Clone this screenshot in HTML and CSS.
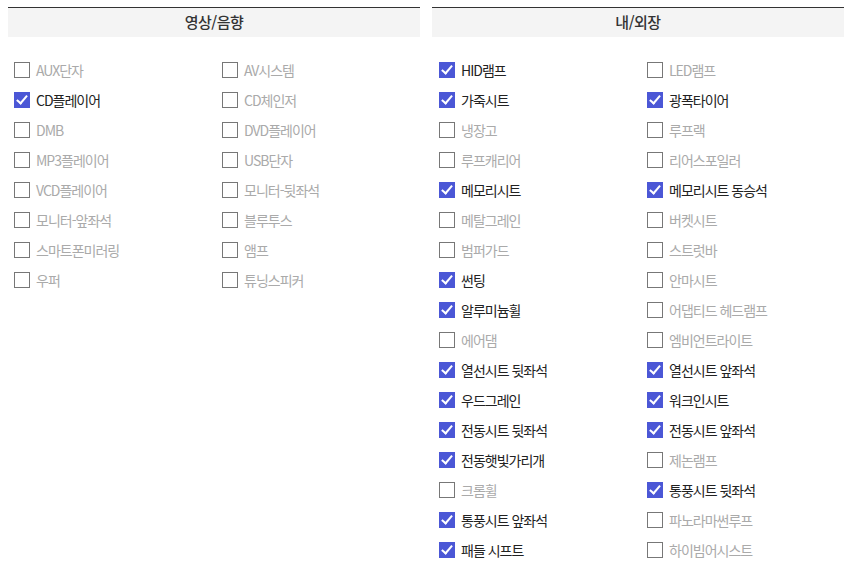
FILE: index.html
```html
<!DOCTYPE html>
<html lang="ko">
<head>
<meta charset="UTF-8">
<meta name="viewport" content="width=device-width, initial-scale=1.0">
<title>옵션</title>
<link rel="stylesheet" href="styles.css">
</head>
<body>

<div class="options">
  <div class="panel">
    <div class="panel-title">영상/음향</div>
    <ul class="opt-list">
      <li class="opt"><span class="box"></span>AUX단자</li>
      <li class="opt"><span class="box"></span>AV시스템</li>
      <li class="opt on"><span class="box"></span>CD플레이어</li>
      <li class="opt"><span class="box"></span>CD체인저</li>
      <li class="opt"><span class="box"></span>DMB</li>
      <li class="opt"><span class="box"></span>DVD플레이어</li>
      <li class="opt"><span class="box"></span>MP3플레이어</li>
      <li class="opt"><span class="box"></span>USB단자</li>
      <li class="opt"><span class="box"></span>VCD플레이어</li>
      <li class="opt"><span class="box"></span>모니터-뒷좌석</li>
      <li class="opt"><span class="box"></span>모니터-앞좌석</li>
      <li class="opt"><span class="box"></span>블루투스</li>
      <li class="opt"><span class="box"></span>스마트폰미러링</li>
      <li class="opt"><span class="box"></span>앰프</li>
      <li class="opt"><span class="box"></span>우퍼</li>
      <li class="opt"><span class="box"></span>튜닝스피커</li>
    </ul>
  </div>

  <div class="panel">
    <div class="panel-title">내/외장</div>
    <ul class="opt-list">
      <li class="opt on"><span class="box"></span>HID램프</li>
      <li class="opt"><span class="box"></span>LED램프</li>
      <li class="opt on"><span class="box"></span>가죽시트</li>
      <li class="opt on"><span class="box"></span>광폭타이어</li>
      <li class="opt"><span class="box"></span>냉장고</li>
      <li class="opt"><span class="box"></span>루프랙</li>
      <li class="opt"><span class="box"></span>루프캐리어</li>
      <li class="opt"><span class="box"></span>리어스포일러</li>
      <li class="opt on"><span class="box"></span>메모리시트</li>
      <li class="opt on"><span class="box"></span>메모리시트 동승석</li>
      <li class="opt"><span class="box"></span>메탈그레인</li>
      <li class="opt"><span class="box"></span>버켓시트</li>
      <li class="opt"><span class="box"></span>범퍼가드</li>
      <li class="opt"><span class="box"></span>스트럿바</li>
      <li class="opt on"><span class="box"></span>썬팅</li>
      <li class="opt"><span class="box"></span>안마시트</li>
      <li class="opt on"><span class="box"></span>알루미늄휠</li>
      <li class="opt"><span class="box"></span>어댑티드 헤드램프</li>
      <li class="opt"><span class="box"></span>에어댐</li>
      <li class="opt"><span class="box"></span>엠비언트라이트</li>
      <li class="opt on"><span class="box"></span>열선시트 뒷좌석</li>
      <li class="opt on"><span class="box"></span>열선시트 앞좌석</li>
      <li class="opt on"><span class="box"></span>우드그레인</li>
      <li class="opt on"><span class="box"></span>워크인시트</li>
      <li class="opt on"><span class="box"></span>전동시트 뒷좌석</li>
      <li class="opt on"><span class="box"></span>전동시트 앞좌석</li>
      <li class="opt on"><span class="box"></span>전동햇빛가리개</li>
      <li class="opt"><span class="box"></span>제논램프</li>
      <li class="opt"><span class="box"></span>크롬휠</li>
      <li class="opt on"><span class="box"></span>통풍시트 뒷좌석</li>
      <li class="opt on"><span class="box"></span>통풍시트 앞좌석</li>
      <li class="opt"><span class="box"></span>파노라마썬루프</li>
      <li class="opt on"><span class="box"></span>패들 시프트</li>
      <li class="opt"><span class="box"></span>하이빔어시스트</li>
    </ul>
  </div>
</div>

</body>
</html>
```

FILE: styles.css
```css
body {
  margin: 0;
  font-family: "Noto Sans CJK KR", "Noto Sans", sans-serif;
  background: #fff;
}
.options {
  display: grid;
  grid-template-columns: 412px 412px;
  column-gap: 12px;
  padding: 7px 8px 0 8px;
}
.panel-title {
  height: 29px;
  line-height: 28px;
  border-top: 1px solid #333;
  background: #f4f4f4;
  text-align: center;
  font-size: 15px;
  font-weight: 500;
  color: #333;
  letter-spacing: -0.5px;
}
.opt-list {
  list-style: none;
  margin: 0;
  padding: 18px 0 0 6px;
  display: grid;
  grid-template-columns: 208px 1fr;
}
.panel:last-child .opt-list {
  padding-left: 7px;
}
.opt {
  height: 30px;
  display: flex;
  align-items: center;
  font-size: 14px;
  letter-spacing: -1px;
  color: #aaa;
}
.box {
  width: 14px;
  height: 14px;
  border: 1px solid #777;
  background: #fff;
  margin-right: 6px;
  position: relative;
  flex: none;
}
.opt.on {
  color: #222;
}
.opt.on .box {
  background: #4b57d6;
  border-color: #4b57d6;
}
.opt.on .box::after {
  content: '';
  position: absolute;
  left: 4px;
  top: 0px;
  width: 4px;
  height: 9px;
  border: solid #fff;
  border-width: 0 2px 2px 0;
  transform: rotate(40deg);
}
```
